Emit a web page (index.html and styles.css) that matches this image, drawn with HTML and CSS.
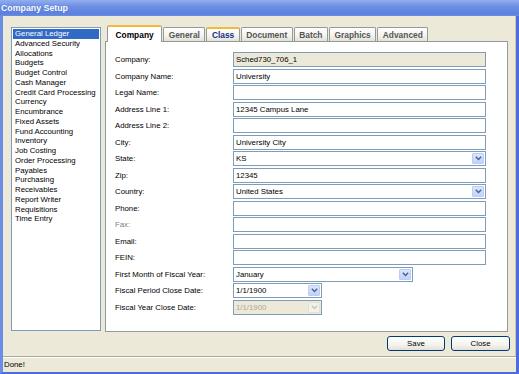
FILE: index.html
```html
<!DOCTYPE html>
<html lang="en">
  <head>
    <meta charset="UTF-8" />
    <title>Company Setup</title>
    <link rel="stylesheet" href="styles.css">
  </head>
  <body>
    <div class="window">
      <div class="titlebar">Company Setup</div>

      <div class="client">
        <div class="main">
          <ul class="modules">
            <li class="selected">General Ledger</li>
            <li>Advanced Security</li>
            <li>Allocations</li>
            <li>Budgets</li>
            <li>Budget Control</li>
            <li>Cash Manager</li>
            <li>Credit Card Processing</li>
            <li>Currency</li>
            <li>Encumbrance</li>
            <li>Fixed Assets</li>
            <li>Fund Accounting</li>
            <li>Inventory</li>
            <li>Job Costing</li>
            <li>Order Processing</li>
            <li>Payables</li>
            <li>Purchasing</li>
            <li>Receivables</li>
            <li>Report Writer</li>
            <li>Requisitions</li>
            <li>Time Entry</li>
          </ul>

          <div class="tabs">
            <div class="tab-row">
              <div class="tab active">Company</div>
              <div class="tab">General</div>
              <div class="tab hover">Class</div>
              <div class="tab">Document</div>
              <div class="tab">Batch</div>
              <div class="tab">Graphics</div>
              <div class="tab">Advanced</div>
            </div>

            <div class="panel">
              <div class="form">
                <label>Company:</label>
                <input class="readonly" type="text" value="Sched730_706_1" readonly />

                <label>Company Name:</label>
                <input type="text" value="University" />

                <label>Legal Name:</label>
                <input type="text" value="" />

                <label>Address Line 1:</label>
                <input type="text" value="12345 Campus Lane" />

                <label>Address Line 2:</label>
                <input type="text" value="" />

                <label>City:</label>
                <input type="text" value="University City" />

                <label>State:</label>
                <div class="combo">
                  <span class="combo-text">KS</span>
                  <span class="combo-btn"><svg width="7" height="5" viewBox="0 0 7 5"><path d="M0.8 0.8 L3.5 3.6 L6.2 0.8" fill="none" stroke="#4d6185" stroke-width="1.4"/></svg></span>
                </div>

                <label>Zip:</label>
                <input type="text" value="12345" />

                <label>Country:</label>
                <div class="combo">
                  <span class="combo-text">United States</span>
                  <span class="combo-btn"><svg width="7" height="5" viewBox="0 0 7 5"><path d="M0.8 0.8 L3.5 3.6 L6.2 0.8" fill="none" stroke="#4d6185" stroke-width="1.4"/></svg></span>
                </div>

                <label>Phone:</label>
                <input type="text" value="" />

                <label class="muted">Fax:</label>
                <input type="text" value="" />

                <label>Email:</label>
                <input type="text" value="" />

                <label>FEIN:</label>
                <input type="text" value="" />

                <label>First Month of Fiscal Year:</label>
                <div class="combo month">
                  <span class="combo-text">January</span>
                  <span class="combo-btn"><svg width="7" height="5" viewBox="0 0 7 5"><path d="M0.8 0.8 L3.5 3.6 L6.2 0.8" fill="none" stroke="#4d6185" stroke-width="1.4"/></svg></span>
                </div>

                <label>Fiscal Period Close Date:</label>
                <div class="combo date">
                  <span class="combo-text">1/1/1900</span>
                  <span class="combo-btn"><svg width="7" height="5" viewBox="0 0 7 5"><path d="M0.8 0.8 L3.5 3.6 L6.2 0.8" fill="none" stroke="#4d6185" stroke-width="1.4"/></svg></span>
                </div>

                <label>Fiscal Year Close Date:</label>
                <div class="combo date disabled">
                  <span class="combo-text">1/1/1900</span>
                  <span class="combo-btn"><svg width="7" height="5" viewBox="0 0 7 5"><path d="M0.8 0.8 L3.5 3.6 L6.2 0.8" fill="none" stroke="#c9c7ba" stroke-width="1.4"/></svg></span>
                </div>
              </div>
            </div>
          </div>
        </div>

        <div class="buttons">
          <button type="button">Save</button>
          <button type="button">Close</button>
        </div>
      </div>

      <div class="statusbar">Done!</div>
    </div>
  </body>
</html>
```

FILE: styles.css
```css
/* XP style dialog */
body {
  margin: 0;
  font-family: "Liberation Sans", Arial, sans-serif;
  font-size: 7.8px;
  color: #000;
}
.window {
  width: 519px;
  height: 374px;
  box-sizing: border-box;
  display: flex;
  flex-direction: column;
  background: #ece9d8;
  border-left: 3px solid #6b8de3;
  border-right: 3px solid #4a6fdb;
  border-bottom: 2px solid #4a6fdb;
}
.titlebar {
  height: 16px;
  margin-left: -3px;
  margin-right: -3px;
  padding-left: 1px;
  background: linear-gradient(#93aeee, #6c8fe4 40%, #5b81dd 85%, #6a8de2);
  color: #fff;
  font-weight: bold;
  font-size: 8.8px;
  line-height: 17px;
  text-shadow: 0 0 1px #4060c0;
}
.client {
  height: 340px;
  border-right: 1px solid #c9c6b8;
}
.main {
  display: flex;
  padding: 9px 0 0 8px;
}
.modules {
  list-style: none;
  margin: 2px 0 0 0;
  padding: 1px;
  width: 90px;
  height: 304px;
  box-sizing: border-box;
  background: #fff;
  border: 1px solid #7f9db9;
}
.modules li {
  line-height: 9.75px;
  height: 9.75px;
  padding-left: 2px;
  white-space: nowrap;
}
.modules li.selected {
  background: #316ac5;
  color: #fff;
}
.tabs {
  margin-left: 4px;
  width: 403px;
}
.tab-row {
  display: flex;
  align-items: flex-end;
  height: 16px;
  padding-left: 2px;
}
.tab {
  height: 14px;
  box-sizing: border-box;
  padding: 0 4.5px;
  margin-right: 1px;
  border: 1px solid #919b9c;
  border-bottom: none;
  border-radius: 2px 2px 0 0;
  background: linear-gradient(#fff, #f3f2ec 60%, #e3e1d6);
  font-weight: bold;
  font-size: 8.4px;
  line-height: 14px;
  color: #555;
}
.tab.active {
  height: 17px;
  margin-bottom: -1px;
  padding: 0 7.5px;
  background: #fff;
  color: #000;
  border-top: 2px solid #f5b83a;
  line-height: 16px;
  position: relative;
}
.tab.hover {
  border-top: 2px solid #f5b83a;
  color: #1a2a8a;
  line-height: 12px;
}
.panel {
  height: 291px;
  box-sizing: border-box;
  background: #fff;
  border: 1px solid #919b9c;
  padding: 10px 0 0 9px;
}
.form {
  display: grid;
  grid-template-columns: 118px 253px;
  row-gap: 1.5px;
}
.form label {
  align-self: center;
  white-space: nowrap;
}
.form label.muted {
  color: #808080;
}
.form input,
.combo {
  height: 15px;
  width: 100%;
  box-sizing: border-box;
  margin: 0;
  padding: 0 2px;
  border: 1px solid #7f9db9;
  font-family: "Liberation Sans", Arial, sans-serif;
  font-size: 7.8px;
  color: #000;
  background: #fff;
  outline: none;
}
.form input.readonly {
  background: #ece9d8;
}
.combo {
  display: flex;
  align-items: center;
  padding: 1px 1px 1px 2px;
}
.combo-text {
  flex: 1;
}
.combo-btn {
  width: 12px;
  height: 11px;
  display: flex;
  align-items: center;
  justify-content: center;
  box-sizing: border-box;
  border: 1px solid #b9cdf8;
  border-radius: 1px;
  background: linear-gradient(#dbe6fd, #c1d3fb);
}
.combo.month {
  width: 180px;
}
.combo.date {
  width: 89px;
}
.combo.disabled {
  background: #ece9d8;
  color: #aca899;
}
.combo.disabled .combo-btn {
  border-color: #e3e1d6;
  background: #f2f1ea;
}
.buttons {
  display: flex;
  justify-content: flex-end;
  gap: 6px;
  padding: 4px 5px 0 0;
}
.buttons button {
  height: 15px;
  width: 58px;
  padding: 0;
  border: 1px solid #003c74;
  border-radius: 3px;
  background: linear-gradient(#fff, #f4f3ee 60%, #e3e0d6);
  font-family: "Liberation Sans", Arial, sans-serif;
  font-size: 7.8px;
  color: #000;
}
.buttons button + button {
  width: 59px;
}
.statusbar {
  height: 16px;
  box-sizing: border-box;
  border-top: 1px solid #aca899;
  box-shadow: inset 0 1px 0 #fff;
  padding-left: 1px;
  line-height: 16px;
}
```
